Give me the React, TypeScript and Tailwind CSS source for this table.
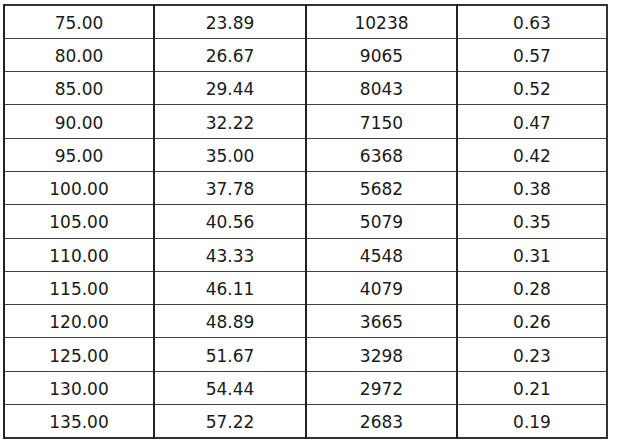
const rows: string[][] = [
  ["75.00", "23.89", "10238", "0.63"],
  ["80.00", "26.67", "9065", "0.57"],
  ["85.00", "29.44", "8043", "0.52"],
  ["90.00", "32.22", "7150", "0.47"],
  ["95.00", "35.00", "6368", "0.42"],
  ["100.00", "37.78", "5682", "0.38"],
  ["105.00", "40.56", "5079", "0.35"],
  ["110.00", "43.33", "4548", "0.31"],
  ["115.00", "46.11", "4079", "0.28"],
  ["120.00", "48.89", "3665", "0.26"],
  ["125.00", "51.67", "3298", "0.23"],
  ["130.00", "54.44", "2972", "0.21"],
  ["135.00", "57.22", "2683", "0.19"],
];

export default function App() {
  return (
    <div className="w-[620px] h-[447px] bg-white pl-[3px] pt-[4px]">
      <table className="w-[605px] border-collapse border-2 border-[#333] text-[17px] text-[#1a1a1a] font-['DejaVu_Sans',Verdana,sans-serif]">
        <colgroup>
          <col className="w-[150px]" />
          <col className="w-[152px]" />
          <col className="w-[151px]" />
          <col className="w-[150px]" />
        </colgroup>
        <tbody>
          {rows.map((row, i) => (
            <tr key={i} className="h-[33.3px] border-b border-[#444]">
              {row.map((cell, j) => (
                <td
                  key={j}
                  className="border-l-2 border-[#222] text-center align-middle leading-none p-0 pt-[3px]"
                >
                  {cell}
                </td>
              ))}
            </tr>
          ))}
        </tbody>
      </table>
    </div>
  );
}
